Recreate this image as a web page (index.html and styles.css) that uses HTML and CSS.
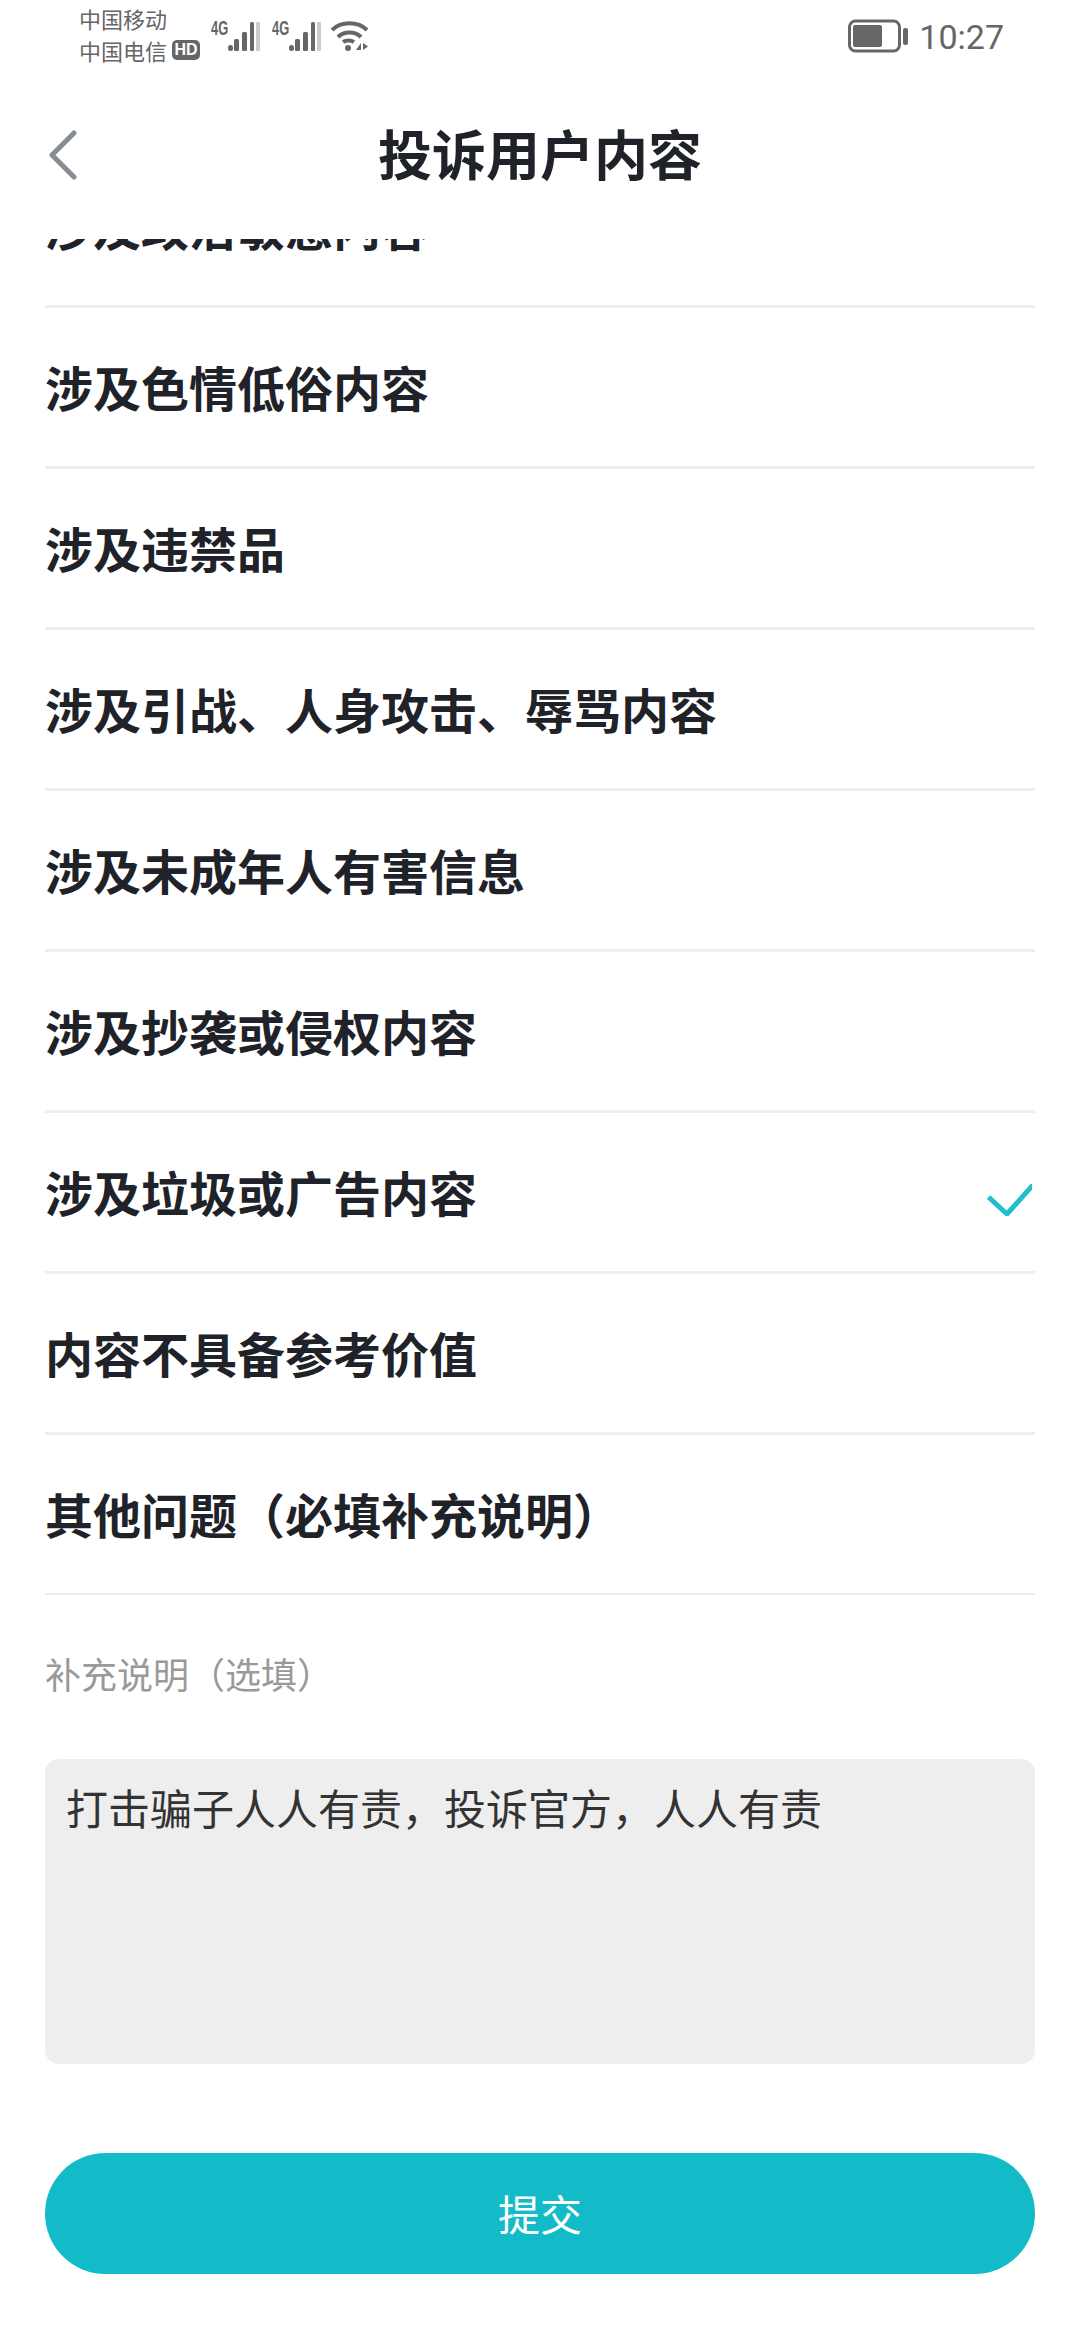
FILE: index.html
```html
<!DOCTYPE html>
<html lang="zh-CN">
<head>
  <meta charset="UTF-8" />
  <meta name="viewport" content="width=device-width, initial-scale=1" />
  <title>投诉用户内容</title>
  <link rel="stylesheet" href="styles.css">
</head>
<body>
  <div id="app">
    <div class="status-bar">
      <div class="status-left">
        <div class="carriers">
          <div>中国移动</div>
          <div class="carrier-hd">中国电信<span class="hd-badge">HD</span></div>
        </div>
        <div class="signal">
          <span class="net">4G</span>
          <svg width="32" height="32" viewBox="0 0 32 32"><rect x="0" y="25" width="5" height="6" rx="2.5" fill="#666"/><rect x="6" y="19" width="5" height="12" rx="1.5" fill="#666"/><rect x="14" y="12" width="5" height="19" rx="1.5" fill="#666"/><rect x="22" y="2" width="4" height="29" rx="1.5" fill="#666"/><rect x="28" y="2" width="4" height="29" rx="1" fill="#ccc"/></svg>
        </div>
        <div class="signal">
          <span class="net">4G</span>
          <svg width="32" height="32" viewBox="0 0 32 32"><rect x="0" y="25" width="5" height="6" rx="2.5" fill="#666"/><rect x="6" y="19" width="5" height="12" rx="1.5" fill="#666"/><rect x="14" y="12" width="5" height="19" rx="1.5" fill="#666"/><rect x="22" y="2" width="4" height="29" rx="1.5" fill="#666"/><rect x="28" y="2" width="4" height="29" rx="1" fill="#ccc"/></svg>
        </div>
        <svg class="wifi" width="38" height="32" viewBox="0 0 38 32"><path d="M1 10C10 1 27 1 36 10M7 17C13 11 24 11 30 17M12 22C15 20 20 20 23 22" fill="none" stroke="#666" stroke-width="4"/><circle cx="17" cy="28" r="3" fill="#666"/><path d="M30 23v7h-5zM32 23v7l5-3.500z" fill="#666"/></svg>
      </div>
      <div class="status-right">
        <svg width="62" height="34" viewBox="0 0 62 34"><rect x="2.500" y="2" width="50" height="30" rx="6" fill="none" stroke="#666" stroke-width="3"/><rect x="6" y="6" width="29" height="22" rx="2" fill="#666"/><rect x="56" y="9" width="5" height="17" rx="2" fill="#666"/></svg>
        <span class="time">10:27</span>
      </div>
    </div>

    <header class="nav-bar">
      <svg class="back-icon" width="30" height="50" viewBox="0 0 30 50"><path d="M26 3L4 25l22 22" fill="none" stroke="#868d94" stroke-width="5" stroke-linecap="round" stroke-linejoin="round"/></svg>
      <h1 class="nav-title">投诉用户内容</h1>
    </header>

    <div class="reason-scroll">
      <ul class="reason-list">
        <li class="reason">涉及政治敏感内容</li>
        <li class="reason">涉及色情低俗内容</li>
        <li class="reason">涉及违禁品</li>
        <li class="reason">涉及引战、人身攻击、辱骂内容</li>
        <li class="reason">涉及未成年人有害信息</li>
        <li class="reason">涉及抄袭或侵权内容</li>
        <li class="reason selected">涉及垃圾或广告内容
          <svg class="check" width="45" height="32" viewBox="0 0 45 32"><path d="M1.500 13L20 30L46 1" fill="none" stroke="#1fc0cc" stroke-width="5"/></svg>
        </li>
        <li class="reason">内容不具备参考价值</li>
        <li class="reason">其他问题（必填补充说明）</li>
      </ul>
    </div>

    <div class="extra-label">补充说明（选填）</div>
    <div class="extra-box">打击骗子人人有责，投诉官方，人人有责</div>
    <button class="submit-btn" type="button">提交</button>
  </div>
</body>
</html>
```

FILE: styles.css
```css
body {
  margin: 0;
  background: #fff;
  font-family: "Noto Sans CJK SC", "Noto Sans", sans-serif;
  color: #1f2329;
}

#app {
  width: 1080px;
  height: 2340px;
  overflow: hidden;
}

/* status bar */
.status-bar {
  height: 72px;
  padding: 0 76px 0 79px;
  display: flex;
  justify-content: space-between;
  align-items: center;
  color: #666;
}
.status-left {
  display: flex;
  align-items: center;
}
.carriers {
  font-size: 22px;
  line-height: 32px;
  margin-top: -4px;
}
.carrier-hd {
  display: flex;
  align-items: center;
}
.hd-badge {
  margin-left: 5px;
  width: 28px;
  height: 20px;
  border-radius: 5px;
  background: #666;
  color: #fff;
  font-family: "Liberation Sans", sans-serif;
  font-size: 16px;
  font-weight: 700;
  line-height: 20px;
  text-align: center;
}
.signal {
  display: flex;
  align-items: flex-start;
  margin-left: 11px;
  height: 32px;
}
.signal + .signal {
  margin-left: 12px;
}
.net {
  font-family: "Liberation Sans", sans-serif;
  font-size: 14px;
  font-weight: 700;
  line-height: 14px;
  width: 17px;
  transform: scale(0.92, 1.45);
  transform-origin: left top;
  margin-top: -2px;
}
.wifi {
  margin-left: 10px;
}
.status-right {
  display: flex;
  align-items: center;
  gap: 10px;
}
.time {
  font-family: Roboto, sans-serif;
  font-size: 34px;
  line-height: 40px;
  margin-top: 2px;
}

/* nav */
.nav-bar {
  height: 167px;
  display: flex;
  align-items: center;
  justify-content: center;
  position: relative;
}
.back-icon {
  position: absolute;
  left: 48px;
  top: 58px;
}
.nav-title {
  margin: 0 0 6px;
  font-size: 54px;
  font-weight: 700;
  line-height: 70px;
}

/* reasons */
.reason-scroll {
  height: 1356px;
  overflow: hidden;
}
.reason-list {
  list-style: none;
  margin: -92px 45px 0;
  padding: 0;
}
.reason {
  height: 155px;
  padding-bottom: 3px;
  border-bottom: 3px solid #eee;
  display: flex;
  align-items: center;
  justify-content: space-between;
  font-size: 48px;
  font-weight: 700;
}
.check {
  margin: 18px 3px 0 0;
}

/* extra note */
.extra-label {
  margin: 53px 45px 0;
  font-size: 36px;
  line-height: 50px;
  color: #999;
}
.extra-box {
  margin: 61px 45px 0;
  height: 305px;
  box-sizing: border-box;
  padding: 18px 21px;
  border-radius: 14px;
  background: #eee;
  font-size: 42px;
  line-height: 60px;
  color: #333;
}
.submit-btn {
  display: block;
  margin: 89px 45px 0;
  padding: 0 0 3px;
  width: 990px;
  height: 121px;
  border: none;
  border-radius: 61px;
  background: #13bbc9;
  color: #fff;
  font-family: inherit;
  font-size: 42px;
}
```
